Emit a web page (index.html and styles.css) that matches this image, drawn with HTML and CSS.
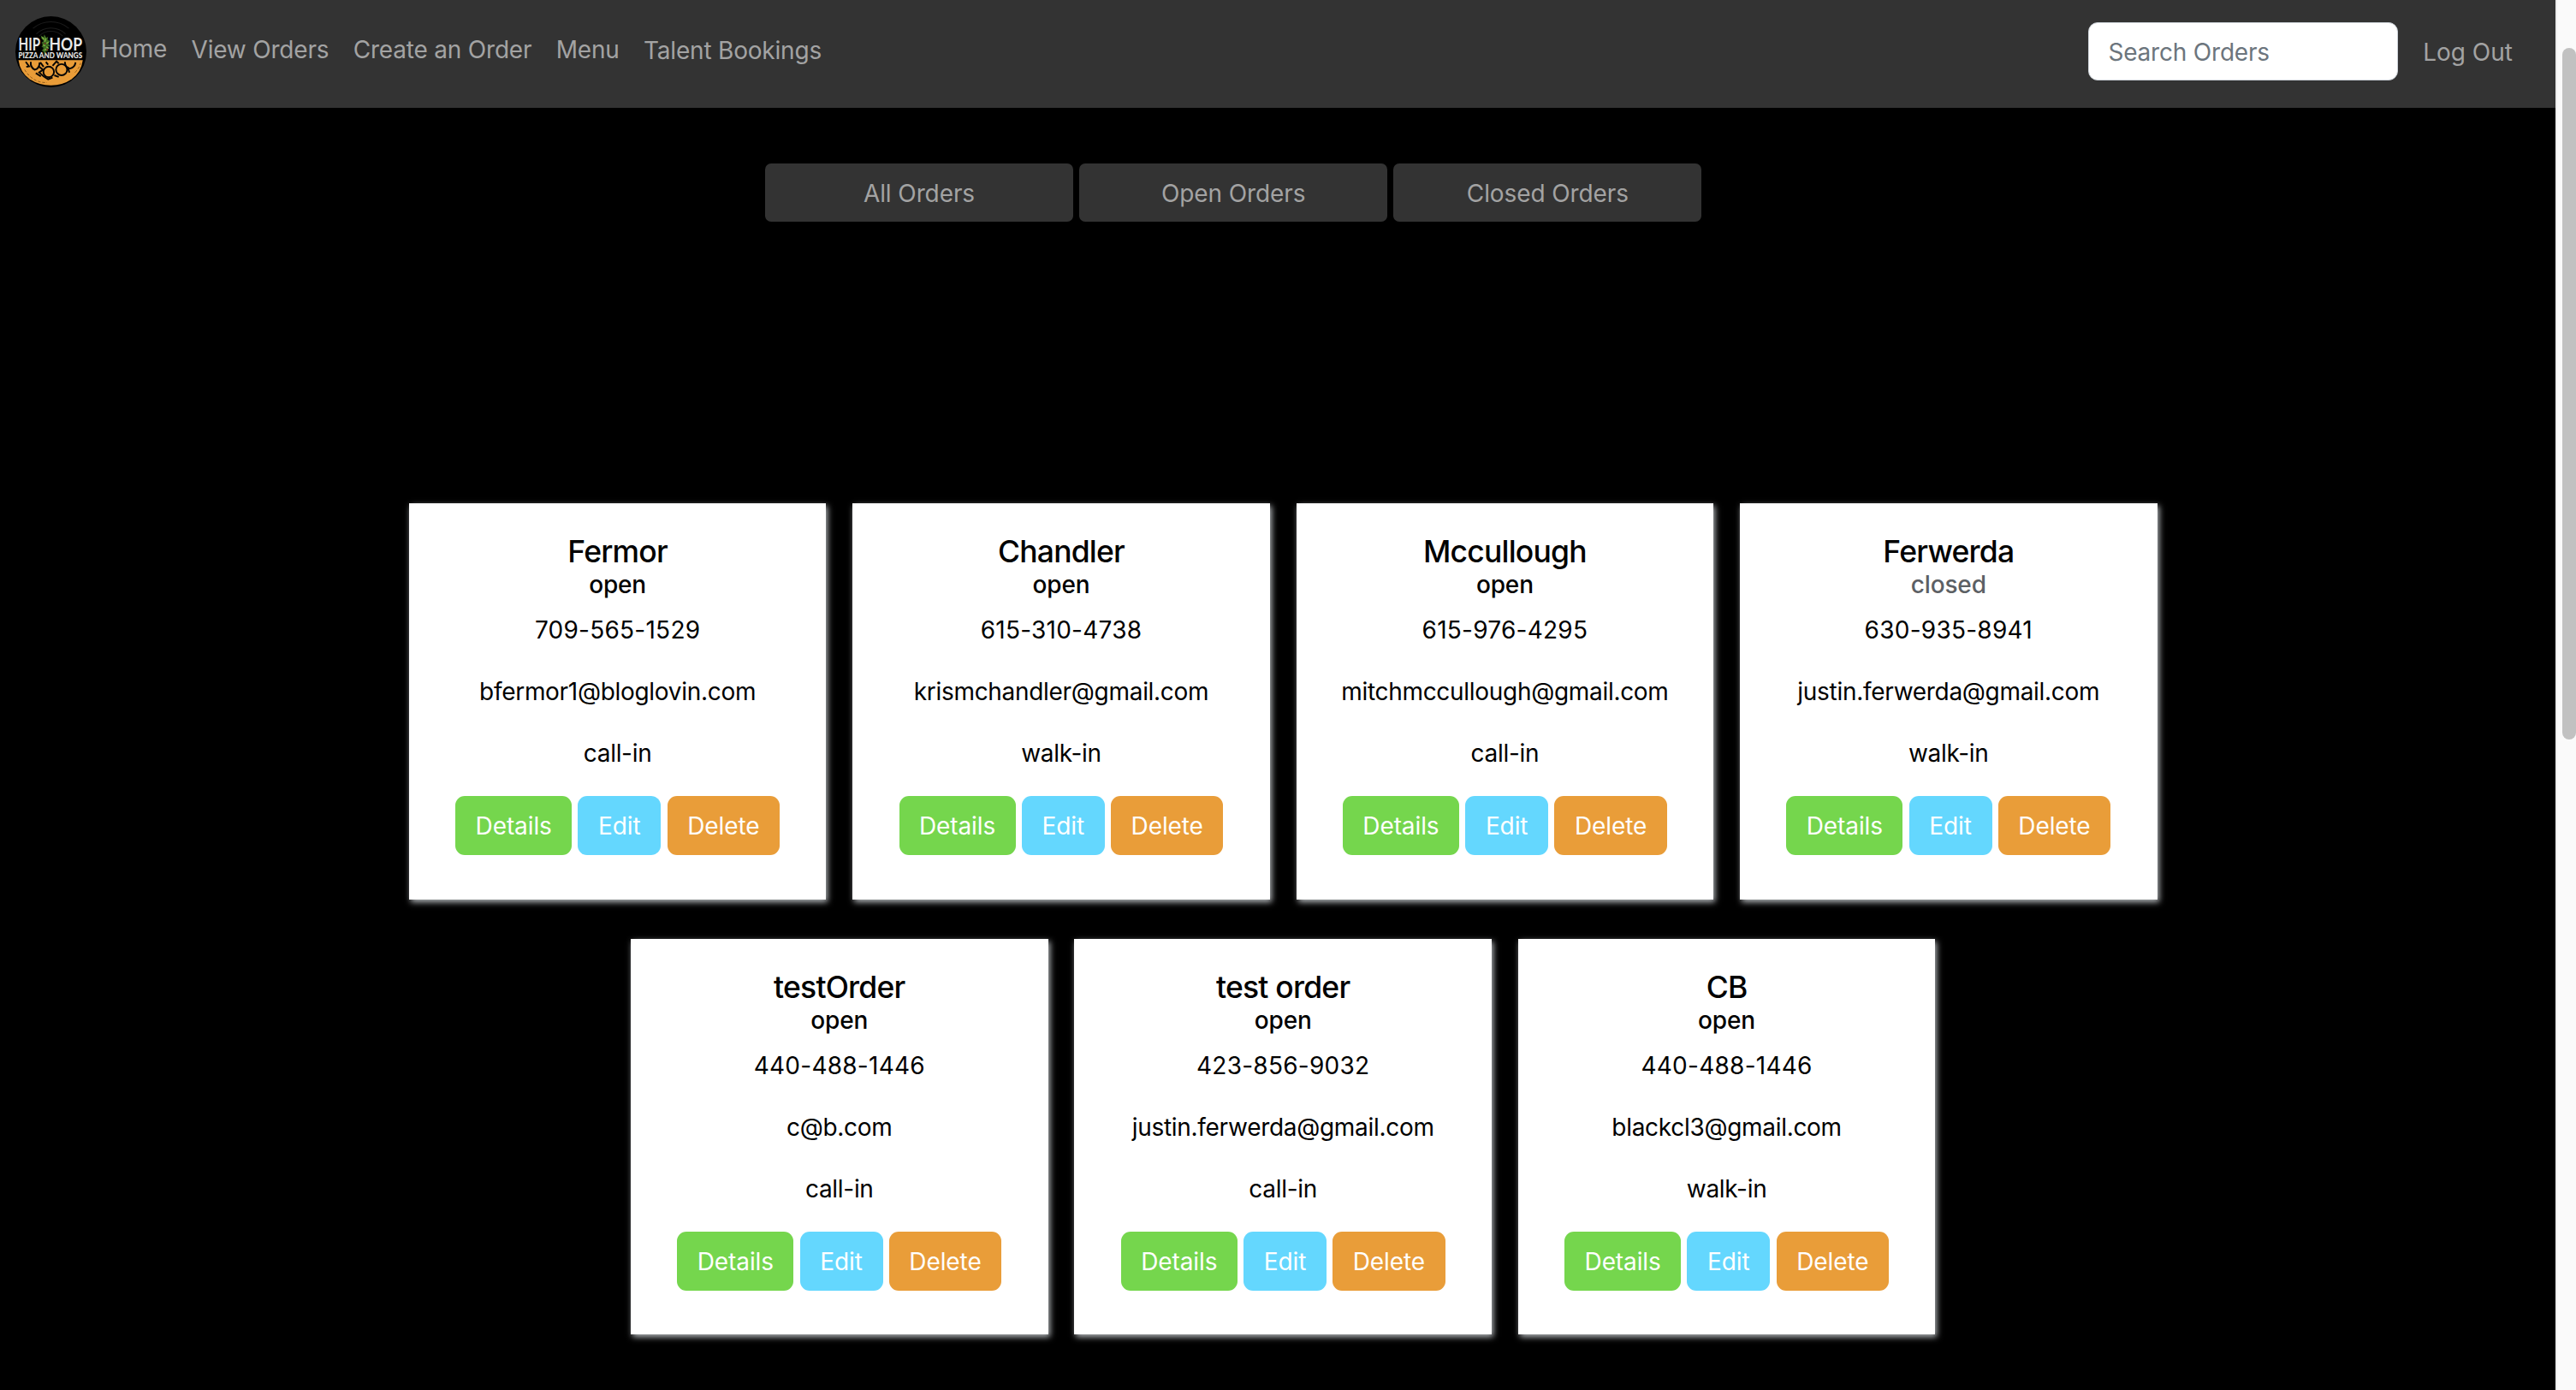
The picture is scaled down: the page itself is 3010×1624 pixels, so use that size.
FILE: index.html
```html
<!DOCTYPE html>
<html lang="en">
<head>
<meta charset="utf-8">
<title>Hip Hop Pizza and Wangs</title>
<link rel="stylesheet" href="styles.css">
</head>
<body>
<div class="page">
<nav class="navbar">
  <svg class="logo" viewBox="0 0 130 130" role="img" aria-label="Hip Hop Pizza and Wangs">
    <circle cx="65" cy="65" r="63.5" fill="#000"/>
    <g fill="none" stroke="#1c1c1c" stroke-width="1.6">
      <path d="M33 23a50 50 0 0 1 64 0M39 33a38 38 0 0 1 52 0M44 37a30 30 0 0 1 42 0"/>
    </g>
    <path d="M7 80h115q-3 22-20 34-16 11-37 11t-38-11Q10 102 7 80z" fill="#e99c38"/>
    <g fill="none" stroke="#050505" stroke-width="3">
      <path d="M20 83l6 8-5 1M29 83q-1 10 7 14 8-1 9-13M90 83q0 10 9 12 9-2 10-11"/>
      <circle cx="61" cy="101" r="9.500"/>
      <circle cx="84" cy="97" r="10"/>
      <path d="M43 91l8 6-7 5 8 7 8 5 8-3M46 84l6 8M68 90l7-8 4 4M71 107l8 3M95 92l3 10M38 103l9 6M56 83l4 5"/>
    </g>
    <path d="M18 97q15 24 40 23M108 102q8-8 10-17" fill="none" stroke="#8e5a19" stroke-width="1.5" stroke-dasharray="5 3"/>
    <g class="logo-text">
      <text x="7" y="62.500" font-size="31" textLength="39" lengthAdjust="spacingAndGlyphs">HIP</text>
      <text x="62" y="62.500" font-size="31" textLength="59" lengthAdjust="spacingAndGlyphs">HOP</text>
      <text class="tagline" x="7" y="77" font-size="13" textLength="114" lengthAdjust="spacingAndGlyphs">PIZZA AND WANGS</text>
    </g>
    <path d="M47 36l5 3 1-5 4 6 3-2-1 6 5 2-4 4 4 5-5 1 1 7-5 2-1 6-2-6-3-2 3-5-4-2 4-3-4-4 4-3-4-5z" fill="#3c6922"/>
    <path d="M49 39l4 4M56 41l-2 6M61 48l-4 2M50 53l5 1M57 56l4 3M53 62l4-2" stroke="#83b842" stroke-width="2" fill="none"/>
    <path d="M53 50h3M57 61h3" stroke="#7b3021" stroke-width="2.5"/>
  </svg>
  <div class="nav-links">
    <a class="nav-home">Home</a>
    <a>View Orders</a>
    <a>Create an Order</a>
    <a>Menu</a>
    <a class="nav-talent">Talent Bookings</a>
  </div>
  <input class="search" type="text" placeholder="Search Orders" aria-label="Search Orders">
  <a class="logout">Log Out</a>
</nav>
<main>
  <div class="filters">
    <button>All Orders</button>
    <button>Open Orders</button>
    <button>Closed Orders</button>
  </div>
  <div class="orders">
    <article class="card"><h5>Fermor</h5><h6>open</h6><p class="phone">709-565-1529</p><p>bfermor1@bloglovin.com</p><p>call-in</p><div class="actions"><a class="details">Details</a><a class="edit">Edit</a><a class="delete">Delete</a></div></article>
    <article class="card"><h5>Chandler</h5><h6>open</h6><p class="phone">615-310-4738</p><p>krismchandler@gmail.com</p><p>walk-in</p><div class="actions"><a class="details">Details</a><a class="edit">Edit</a><a class="delete">Delete</a></div></article>
    <article class="card"><h5>Mccullough</h5><h6>open</h6><p class="phone">615-976-4295</p><p>mitchmccullough@gmail.com</p><p>call-in</p><div class="actions"><a class="details">Details</a><a class="edit">Edit</a><a class="delete">Delete</a></div></article>
    <article class="card"><h5>Ferwerda</h5><h6 class="closed">closed</h6><p class="phone">630-935-8941</p><p>justin.ferwerda@gmail.com</p><p>walk-in</p><div class="actions"><a class="details">Details</a><a class="edit">Edit</a><a class="delete">Delete</a></div></article>
    <article class="card"><h5>testOrder</h5><h6>open</h6><p class="phone">440-488-1446</p><p>c@b.com</p><p>call-in</p><div class="actions"><a class="details">Details</a><a class="edit">Edit</a><a class="delete">Delete</a></div></article>
    <article class="card"><h5>test order</h5><h6>open</h6><p class="phone">423-856-9032</p><p>justin.ferwerda@gmail.com</p><p>call-in</p><div class="actions"><a class="details">Details</a><a class="edit">Edit</a><a class="delete">Delete</a></div></article>
    <article class="card"><h5>CB</h5><h6>open</h6><p class="phone">440-488-1446</p><p>blackcl3@gmail.com</p><p>walk-in</p><div class="actions"><a class="details">Details</a><a class="edit">Edit</a><a class="delete">Delete</a></div></article>
  </div>
</main>
</div>
<div class="scrollbar"><div class="thumb"></div></div>
</body>
</html>
```
FILE: styles.css
```css
* { box-sizing: border-box; }
body {
  margin: 0;
  height: 1624px;
  display: flex;
  overflow: hidden;
  background: #000;
  font-family: Inter, "Liberation Sans", sans-serif;
  font-size: 28px;
  line-height: 43.2px;
  letter-spacing: -0.3px;
  color: #000;
}
.page { flex: 1; min-width: 0; }

.navbar {
  height: 126px;
  background: #333;
  color: #a3a3a3;
  display: flex;
  align-items: flex-start;
  padding: 18px 50px 0 17px;
  letter-spacing: -0.2px;
}
.logo { width: 85px; height: 85px; }
.logo-text { font-family: Lato, sans-serif; font-weight: 700; fill: #e8e8e8; letter-spacing: 0; }
.tagline { font-weight: 900; }
.nav-links { display: flex; gap: 28.4px; padding: 19px 0 0 15.5px; flex: 1; }
.nav-home { margin-top: -1px; }
.nav-talent { margin-top: 1px; }
.search {
  width: 362px;
  height: 68px;
  margin-top: 8px;
  padding: 2px 22px 0;
  border: 1px solid #ced4da;
  border-radius: 11px;
  background: #fff;
  font: inherit;
  letter-spacing: inherit;
}
.search::placeholder { color: #6c757d; opacity: 1; }
.logout { padding: 22px 0 0 28.8px; letter-spacing: 0; }

.filters { display: flex; gap: 7.2px; padding: 65px 0 0 894px; }
.filters button {
  width: 360px;
  height: 68px;
  padding: 3px 0 0;
  border: 0;
  border-radius: 7px;
  background: #333;
  color: #a3a3a3;
  font: inherit;
  letter-spacing: -0.1px;
}

.orders {
  margin: 329px auto 0;
  padding-left: 12.4px;
  width: 2300px;
  display: flex;
  flex-wrap: wrap;
  justify-content: center;
  gap: 46px 30.9px;
}
.card {
  width: 487.5px;
  height: 463px;
  padding-top: 34.5px;
  background: #fff;
  box-shadow: 2px 3px 7px #b5b9bc;
  text-align: center;
}
.card:nth-child(n+5) { height: 462px; }
.card h5 { margin: 0; font-size: 35.5px; font-weight: 500; line-height: 43.2px; letter-spacing: -0.8px; }
.card h6 { margin: 0 0 14.4px; font-size: 28px; font-weight: 500; line-height: 34.6px; letter-spacing: -0.15px; }
.card .closed { color: #5c6064; }
.card p { margin: 0 0 28.8px; }
.card .phone { letter-spacing: 0.25px; }
.actions { display: flex; justify-content: center; gap: 7.2px; margin-top: -0.9px; color: #fff; line-height: 70px; letter-spacing: -0.1px; }
.actions a { border-radius: 11px; height: 69px; }
.details { width: 136px; background: #75d64d; }
.edit { width: 97px; background: #64d7fe; }
.delete { width: 131.5px; background: #e99d39; }

.scrollbar {
  width: 24px;
  padding: 56px 0 0 6px;
  background: #fafafa;
  border-left: 2px solid #ececec;
}
.thumb { height: 808px; border-radius: 8px; background: #c1c1c1; }
```
